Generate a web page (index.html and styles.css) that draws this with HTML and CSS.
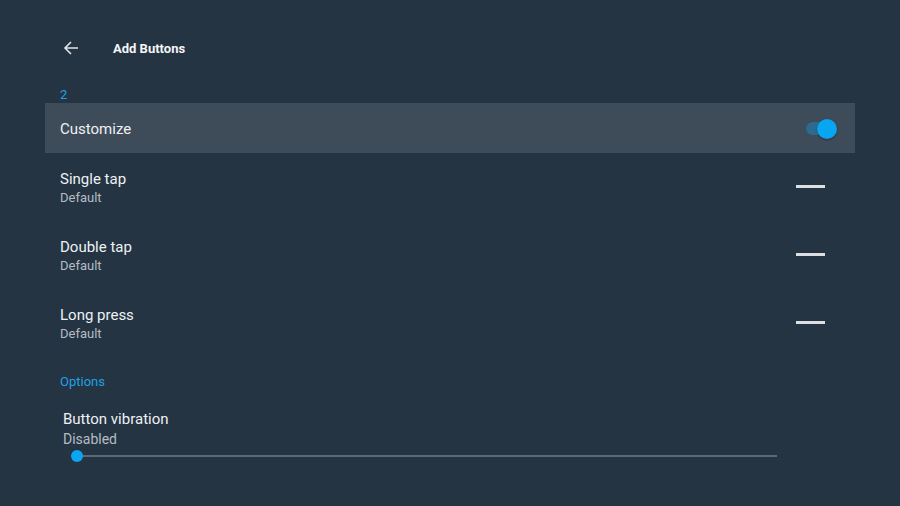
FILE: index.html
```html
<!DOCTYPE html>
<html lang="en">
<head>
    <meta charset="UTF-8">
    <meta name="viewport" content="width=device-width, initial-scale=1.0">
    <title>Add Buttons</title>
    <link rel="stylesheet" href="styles.css">
</head>
<body>
    <div class="header">
        <svg class="back" width="16" height="16" viewBox="0 0 16 16">
            <path d="M15 8H2M8 2L2 8l6 6" fill="none" stroke="#e0e4e8" stroke-width="1.6"/>
        </svg>
        <span class="title">Add Buttons</span>
    </div>

    <div class="section-label first">2</div>

    <div class="list">
        <div class="row selected">
            <span class="row-title">Customize</span>
            <span class="toggle"><span class="knob"></span></span>
        </div>
        <div class="row">
            <div class="texts">
                <div class="row-title">Single tap</div>
                <div class="row-sub">Default</div>
            </div>
            <span class="dash"></span>
        </div>
        <div class="row">
            <div class="texts">
                <div class="row-title">Double tap</div>
                <div class="row-sub">Default</div>
            </div>
            <span class="dash"></span>
        </div>
        <div class="row">
            <div class="texts">
                <div class="row-title">Long press</div>
                <div class="row-sub">Default</div>
            </div>
            <span class="dash"></span>
        </div>
    </div>

    <div class="section-label">Options</div>

    <div class="vibration">
        <div class="row-title">Button vibration</div>
        <div class="vib-value">Disabled</div>
        <div class="slider">
            <div class="track"></div>
            <div class="thumb"></div>
        </div>
    </div>
</body>
</html>
```

FILE: styles.css
```css
body {
    margin: 0;
    background-color: #243443;
    font-family: Roboto, 'Liberation Sans', sans-serif;
    color: #eef1f3;
    width: 900px;
    height: 506px;
    overflow: hidden;
}
.header {
    display: flex;
    align-items: center;
    height: 32px;
    padding-top: 32px;
    padding-left: 63px;
}
.back {
    display: block;
}
.title {
    margin-left: 34px;
    font-size: 13px;
    font-weight: bold;
    color: #f4f6f7;
}
.section-label {
    padding-left: 60px;
    font-size: 13px;
    line-height: 16px;
    color: #1ea1e6;
    margin-top: 17px;
}
.section-label.first {
    margin-top: 23px;
}
.list {
    margin: 0 45px;
}
.row {
    display: flex;
    align-items: center;
    justify-content: space-between;
    height: 68px;
    padding: 2px 30px 0 15px;
    box-sizing: border-box;
}
.row.selected {
    height: 50px;
    padding: 1px 18px 0 15px;
    background-color: #3e4b58;
}
.row-title {
    font-size: 15px;
    line-height: 20px;
}
.row-sub {
    font-size: 13px;
    line-height: 18px;
    color: #b4bcc3;
}
.dash {
    width: 29px;
    height: 3px;
    background-color: #dcdfe2;
    margin-top: -4px;
}
.toggle {
    position: relative;
    width: 31px;
    height: 20px;
    display: flex;
    align-items: center;
}
.toggle::before {
    content: "";
    width: 24px;
    height: 13px;
    border-radius: 7px;
    background-color: #2b6b8f;
}
.knob {
    position: absolute;
    right: 0;
    top: 0;
    width: 20px;
    height: 20px;
    border-radius: 50%;
    background-color: #08a5f0;
    box-shadow: 0 1px 2px rgba(0, 0, 0, 0.35);
}
.vibration {
    padding-left: 63px;
    margin-top: 19px;
}
.vib-value {
    font-size: 14px;
    line-height: 20px;
    color: #b4bcc3;
}
.slider {
    position: relative;
    margin-left: 9px;
    width: 710px;
    height: 16px;
}
.track {
    position: absolute;
    left: 5px;
    top: 6px;
    width: 700px;
    height: 2px;
    background-color: #5b6976;
}
.thumb {
    position: absolute;
    left: -1px;
    top: 1px;
    width: 12px;
    height: 12px;
    border-radius: 50%;
    background-color: #0aa6f2;
}
```
